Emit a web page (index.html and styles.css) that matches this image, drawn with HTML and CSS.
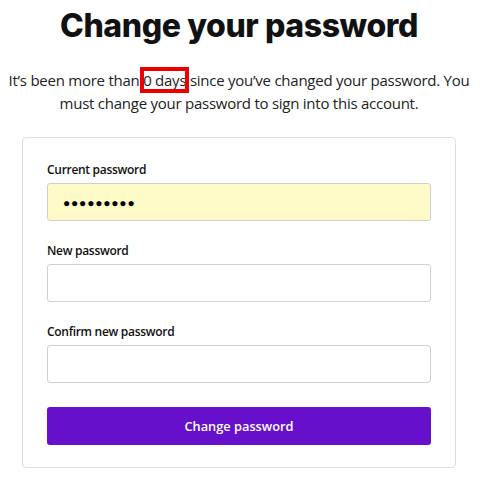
FILE: index.html
```html
<!DOCTYPE html>
<html>
<head>
<meta charset="utf-8">
<link rel="stylesheet" href="styles.css">
</head>
<body>
<main class="page">
  <h1 class="title">Change your password</h1>
  <p class="intro">It’s been more than <span class="mark">0 days</span> since you’ve changed your password. You must change your password to sign into this account.</p>
  <form class="card">
    <label class="field">
      <span class="label">Current password</span>
      <span class="input filled">●●●●●●●●●</span>
    </label>
    <label class="field">
      <span class="label">New password</span>
      <span class="input"></span>
    </label>
    <label class="field">
      <span class="label">Confirm new password</span>
      <span class="input"></span>
    </label>
    <button type="button" class="submit">Change password</button>
  </form>
</main>
</body>
</html>
```
FILE: styles.css
```css
html, body {
  margin: 0;
  padding: 0;
  background: #ffffff;
}
.page {
  width: 478px;
  display: flex;
  flex-direction: column;
  align-items: center;
  font-family: "Open Sans", "Noto Sans", sans-serif;
  color: #1a1a1a;
}
.title {
  margin: 6px 0 0;
  font-family: Inter, sans-serif;
  font-weight: 800;
  font-size: 32px;
  line-height: 40px;
  letter-spacing: -0.4px;
  color: #111;
}
.intro {
  margin: 23px 0 0;
  width: 476px;
  text-align: center;
  font-size: 15px;
  line-height: 23px;
  letter-spacing: -0.25px;
  color: #222;
}
.mark {
  outline: 4px solid #ee0000;
  outline-offset: -1px;
}
.card {
  margin: 22px 0 0;
  width: 384px;
  padding: 23px 24px 22px 24px;
  border: 1px solid #dedede;
  border-radius: 4px;
  display: flex;
  flex-direction: column;
}
.field {
  display: flex;
  flex-direction: column;
  margin-bottom: 21px;
}
.label {
  font-size: 12px;
  font-weight: 600;
  line-height: 18px;
  letter-spacing: -0.3px;
  margin-bottom: 4px;
  color: #111;
}
.input {
  height: 36px;
  border: 1px solid #cfcfcf;
  border-radius: 3px;
  box-sizing: content-box;
  display: flex;
  align-items: center;
  padding-left: 15px;
  font-size: 12px;
  letter-spacing: 0.8px;
  color: #000;
}
.filled {
  background: #fefbc8;
}
.submit {
  margin-top: 3px;
  height: 38px;
  border: 0;
  border-radius: 3px;
  background: #6610cc;
  color: #fff;
  font-family: "Open Sans", "Noto Sans", sans-serif;
  font-weight: 600;
  font-size: 12.8px;
  cursor: pointer;
}
```
